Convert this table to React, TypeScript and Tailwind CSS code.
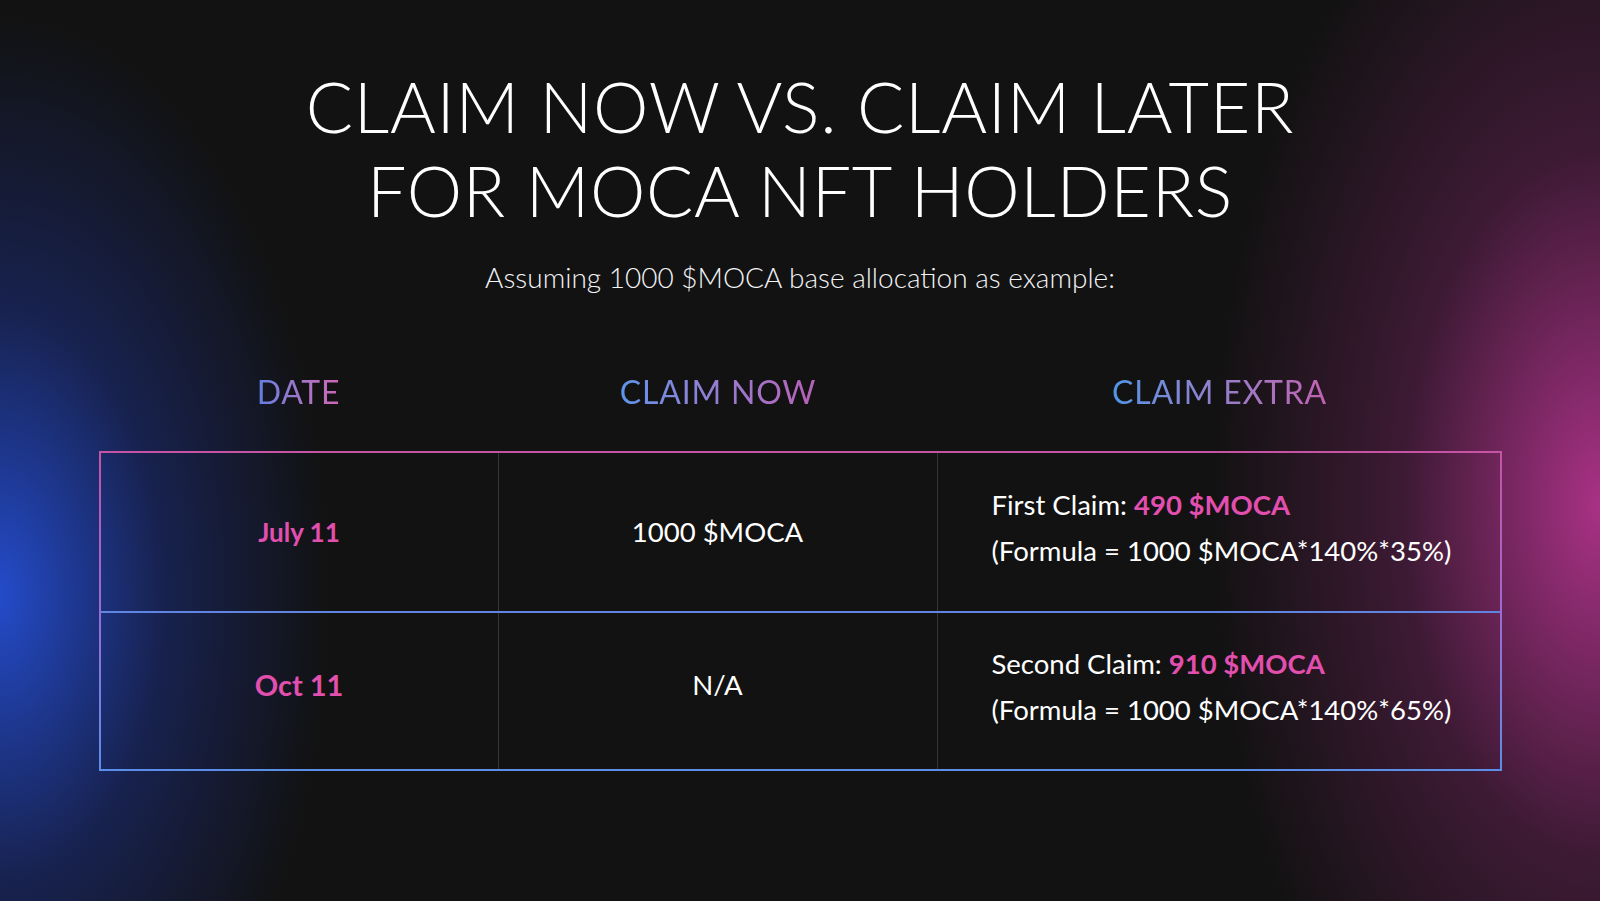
const rows = [
  {
    date: "July 11",
    dateSize: "text-[26px]",
    datePad: "",
    now: "1000 $MOCA",
    label: "First Claim:",
    amount: "490 $MOCA",
    formula: "(Formula = 1000 $MOCA*140%*35%)",
  },
  {
    date: "Oct 11",
    dateSize: "text-[29px]",
    datePad: "pb-[12px]",
    now: "N/A",
    label: "Second Claim:",
    amount: "910 $MOCA",
    formula: "(Formula = 1000 $MOCA*140%*65%)",
  },
]

const App = () => {
  return (
    <main className="relative w-full h-[901px] overflow-hidden bg-[#121212] font-['Lato','Inter',sans-serif] text-white">
      {/* side glows */}
      <div className="absolute inset-0 bg-[radial-gradient(ellipse_330px_580px_at_0%_66%,rgba(36,76,205,0.98),rgba(30,52,150,0.45)_50%,transparent_100%),radial-gradient(ellipse_390px_700px_at_100%_56%,rgba(172,50,136,0.98),rgba(115,36,95,0.45)_50%,transparent_100%)]"></div>

      <div className="relative flex flex-col items-center">
        {/* Title */}
        <h1 className="mt-[64px] text-center text-[70px] leading-[84px] font-light tracking-[0.01em]">
          CLAIM NOW VS. CLAIM LATER
          <br />
          FOR MOCA NFT HOLDERS
        </h1>
        <p className="mt-[24px] text-[28px] font-light text-gray-100">
          Assuming 1000 $MOCA base allocation as example:
        </p>

        {/* Table */}
        <div className="mt-[70px] w-[1403px]">
          <div className="grid grid-cols-[400px_439px_564px] text-[32px] font-normal tracking-wide">
            <div className="text-center">
              <span className="bg-gradient-to-r from-[#5f7fe0] to-[#d066b4] bg-clip-text text-transparent">DATE</span>
            </div>
            <div className="text-center">
              <span className="bg-gradient-to-r from-[#5d94ea] to-[#b860b8] bg-clip-text text-transparent">CLAIM NOW</span>
            </div>
            <div className="text-center">
              <span className="bg-gradient-to-r from-[#4e94e6] to-[#c062b0] bg-clip-text text-transparent">CLAIM EXTRA</span>
            </div>
          </div>

          <div className="mt-[35px] border-2 [border-image:linear-gradient(to_bottom,#c653a4,#9a6cd0_50%,#5b8ee8)_1]">
            {rows.map((row, i) => (
              <div
                key={row.date}
                className={`grid grid-cols-[398px_439px_1fr] h-[158px] ${i > 0 ? "border-t-2 border-[#5f84e2]" : ""}`}
              >
                <div className={`flex items-center justify-center border-r border-[#34343a] ${row.datePad}`}>
                  <span className={`${row.dateSize} font-bold text-[#e24fae]`}>{row.date}</span>
                </div>
                <div className={`flex items-center justify-center border-r border-[#34343a] ${row.datePad}`}>
                  <span className="text-[27.5px] text-white">{row.now}</span>
                </div>
                <div className="flex flex-col justify-center pl-[54px] pb-[8px] text-[27.5px] leading-[46px]">
                  <div>
                    {row.label} <span className="font-bold text-[#e24fae]">{row.amount}</span>
                  </div>
                  <div>{row.formula}</div>
                </div>
              </div>
            ))}
          </div>
        </div>
      </div>
    </main>
  )
}

export default App
